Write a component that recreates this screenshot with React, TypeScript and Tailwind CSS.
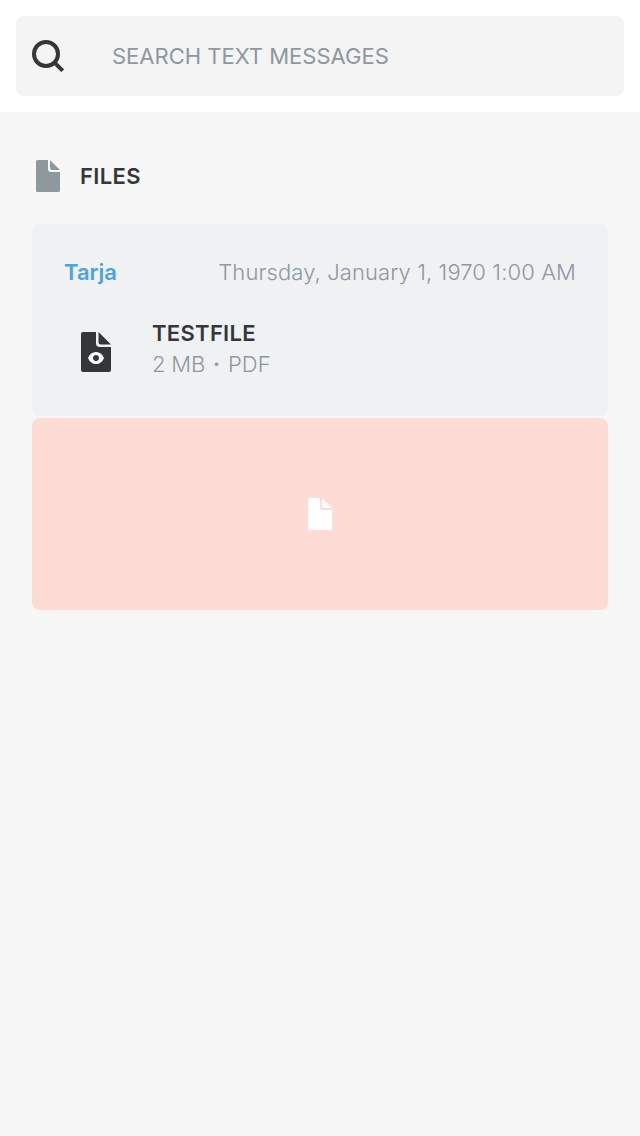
import React from "react";

function SearchIcon() {
  return (
    <svg width="32" height="32" viewBox="0 0 32 32" fill="none" stroke="#33373a" aria-hidden="true">
      <circle cx="14" cy="14" r="12" strokeWidth="4" />
      <path d="M22.3 22.3L30.7 30.7" strokeWidth="4" />
    </svg>
  );
}

function FileIcon({ className, eye = false }: { className: string; eye?: boolean }) {
  return (
    <svg className={className} viewBox="0 0 24 32" fill="currentColor" aria-hidden="true">
      <path d="M1.6 0H12V9a3 3 0 0 0 3 3H24V30.4a1.6 1.6 0 0 1-1.6 1.6H1.6A1.6 1.6 0 0 1 0 30.4V1.6A1.6 1.6 0 0 1 1.6 0Z" />
      <path d="M14 0L24 10H16a2 2 0 0 1-2-2Z" />
      {eye && (
        <>
          <path d="M5.6 20.8C7 17.6 9.2 16 12 16s5 1.6 6.4 4.8C17 24 14.8 25.6 12 25.6S7 24 5.6 20.8Z" fill="#fff" />
          <circle cx="12" cy="20.8" r="2.4" />
        </>
      )}
    </svg>
  );
}

export default function App() {
  return (
    <div className="min-h-[1136px] w-[640px] bg-[#f7f7f7] font-['Inter',sans-serif] text-[22px] leading-8 text-[#33373a]">
      <header className="bg-white p-4">
        <div className="flex h-20 items-center gap-12 rounded-lg bg-[#f4f4f4] px-4">
          <SearchIcon />
          <span className="text-[#8d989f]">SEARCH TEXT MESSAGES</span>
        </div>
      </header>
      <main className="px-8 pt-12">
        <div className="flex items-center gap-5 pl-1">
          <FileIcon className="h-8 w-6 text-[#8d999f]" />
          <h1 className="font-[560] tracking-[0.35px]">FILES</h1>
        </div>
        <section className="mt-8 flex flex-col gap-0.5">
          <article className="h-48 rounded-lg bg-[#f0f1f3] px-8 pt-8">
            <div className="flex justify-between">
              <span className="font-[560] text-[#4ba3e0]">Tarja</span>
              <time className="font-light tracking-[0.11px] text-[#8d989f]">Thursday, January 1, 1970 1:00 AM</time>
            </div>
            <div className="mt-[30px] flex items-start gap-[41px] pl-[17px]">
              <FileIcon className="mt-3.5 h-10 w-[30px]" eye />
              <div className="leading-[31px]">
                <div className="font-[560] tracking-[0.3px]">TESTFILE</div>
                <div className="flex font-light text-[#8d989f]">
                  <span className="tracking-[-0.2px]">2 MB</span>
                  <span className="w-[23px] text-center font-semibold">·</span>
                  <span>PDF</span>
                </div>
              </div>
            </div>
          </article>
          <div className="flex h-48 items-center justify-center rounded-lg bg-[#ffdbd5]">
            <FileIcon className="h-8 w-6 text-white" />
          </div>
        </section>
      </main>
    </div>
  );
}
